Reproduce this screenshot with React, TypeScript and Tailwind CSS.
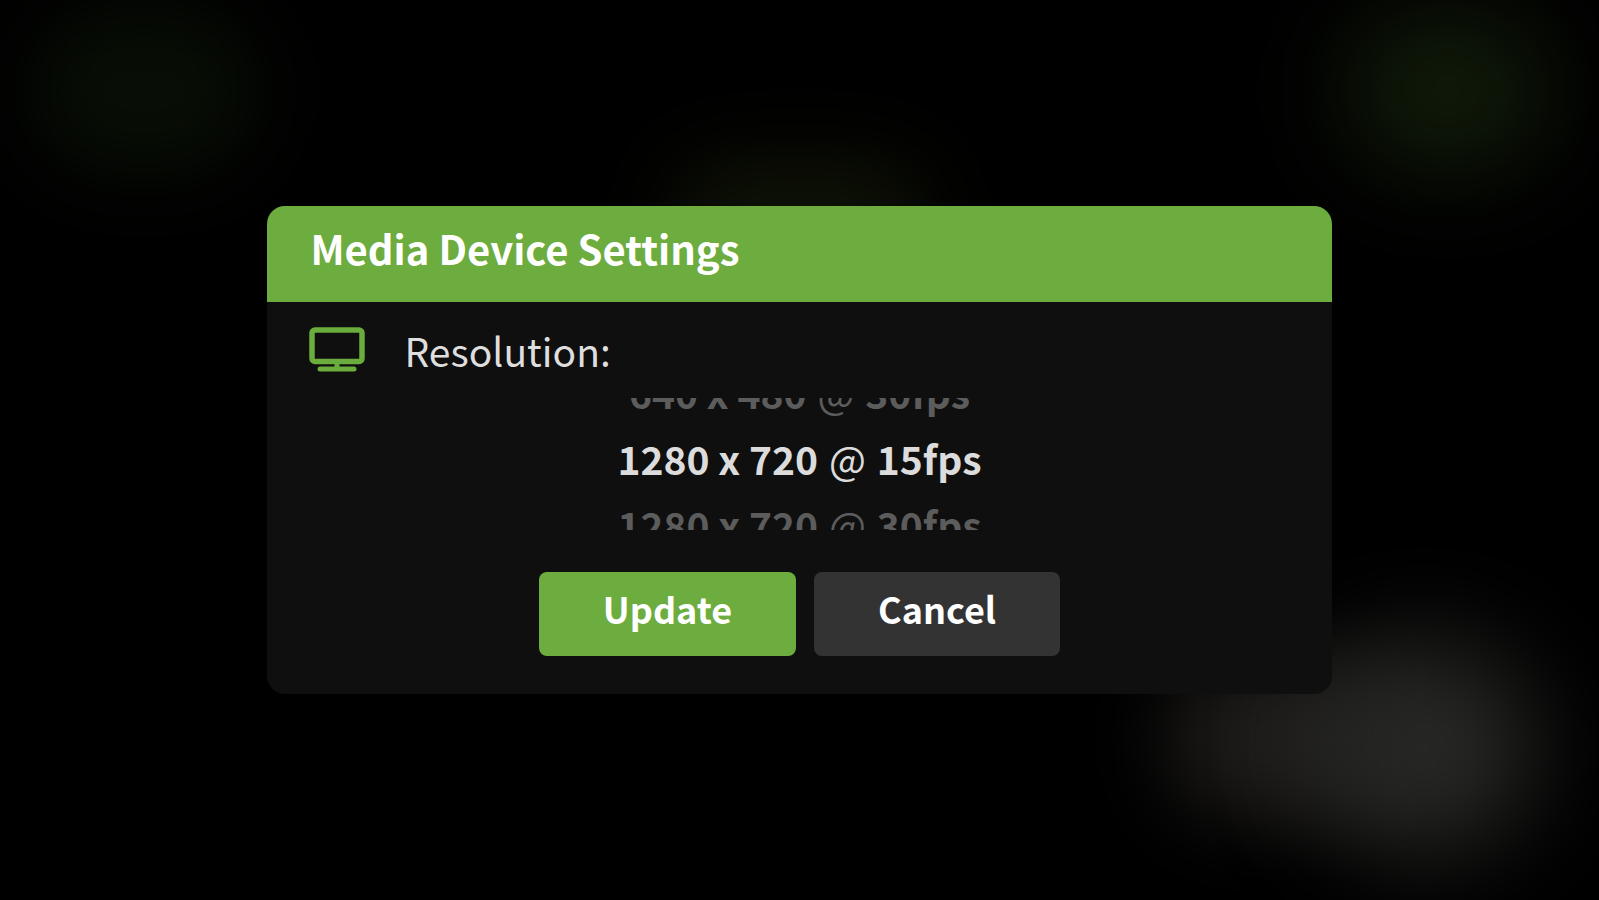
import React from "react";

const resolutions = [
  { size: "640 x 480", fps: "30fps" },
  { size: "1280 x 720", fps: "15fps" },
  { size: "1280 x 720", fps: "30fps" },
];

const MonitorIcon: React.FC = () => (
  <svg
    className="h-[46px] w-14 shrink-0 text-[#6aad3d]"
    viewBox="0 0 56 46"
    fill="none"
    stroke="currentColor"
    aria-hidden="true"
  >
    <rect x="3" y="3" width="50" height="31.5" rx="3" strokeWidth="5.5" />
    <path d="M28 35v7" strokeWidth="5" />
    <path d="M11 42h34" strokeWidth="5" strokeLinecap="round" />
  </svg>
);

// Blurred light spots behind the dialog
const Backdrop: React.FC = () => (
  <div className="absolute inset-0 overflow-hidden">
    <div className="absolute left-[2%] top-[1%] h-[18%] w-[14%] rounded-full bg-[#080e05] blur-[40px]" />
    <div className="absolute right-[3%] top-[1%] h-[18%] w-[13%] rounded-full bg-[#101a09] blur-[48px]" />
    <div className="absolute left-[42%] top-[18%] h-[12%] w-[16%] rounded-full bg-[#0f1306] blur-[40px]" />
    <div className="absolute right-[12%] top-[73%] h-[18%] w-[15%] rounded-full bg-[#1e1c1a] blur-[40px]" />
    <div className="absolute right-[4%] top-[71%] h-[24%] w-[14%] rounded-full bg-[#272825] blur-[48px]" />
  </div>
);

const App: React.FC = () => {
  return (
    <main className="relative flex min-h-screen items-center justify-center bg-black font-['Noto_Sans_CJK_SC','Open_Sans',sans-serif]">
      <Backdrop />

      <section
        role="dialog"
        aria-labelledby="dialog-title"
        className="relative w-2/3 overflow-hidden rounded-[18px] bg-[#0f0f0f] pb-[38px]"
      >
        {/* Header */}
        <header className="bg-[#6dac3e] px-11 pb-6 pt-3">
          <h1
            id="dialog-title"
            className="text-[40px] font-bold leading-[60px] text-white"
          >
            Media Device Settings
          </h1>
        </header>

        {/* Resolution picker */}
        <div className="flex items-center gap-10 px-[42px] pt-[18px]">
          <MonitorIcon />
          <h2
            id="resolution-label"
            className="text-[39px] leading-[60px] text-[#dedede]"
          >
            Resolution:
          </h2>
        </div>
        <div className="mt-[18px] flex h-[132px] items-center justify-center overflow-hidden pb-3">
          <ul
            role="listbox"
            aria-labelledby="resolution-label"
            className="text-center text-[39px] font-bold leading-[66px]"
          >
            {resolutions.map(({ size, fps }, i) => (
              <li
                key={size + fps}
                role="option"
                aria-selected={i === 1}
                className={i === 1 ? "text-[#dcdcdc]" : "text-[#5c5c5c]"}
              >
                {size} <span className="mx-0.5 font-normal">@</span> {fps}
              </li>
            ))}
          </ul>
        </div>

        {/* Buttons */}
        <div className="mt-[42px] flex justify-center gap-[18px] text-[36px] font-bold leading-[60px] text-white">
          <button
            type="button"
            className="rounded-lg bg-[#6dac3e] px-16 pb-[18px] pt-1.5"
          >
            Update
          </button>
          <button
            type="button"
            className="rounded-lg bg-[#333333] px-16 pb-[18px] pt-1.5"
          >
            Cancel
          </button>
        </div>
      </section>
    </main>
  );
};

export default App;
